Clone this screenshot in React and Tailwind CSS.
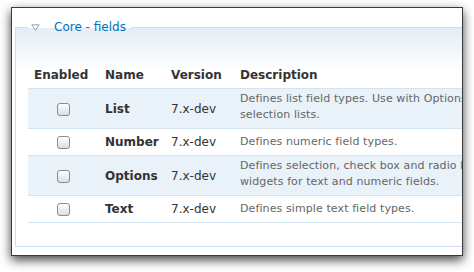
import React from "react";

const rows = [
  { name: "List", desc: ["Defines list field types. Use with Options to create selection lists."], two: true, odd: true },
  { name: "Number", desc: ["Defines numeric field types."], two: false, odd: false },
  { name: "Options", desc: ["Defines selection, check box and radio button widgets for text and numeric fields."], two: true, odd: true },
  { name: "Text", desc: ["Defines simple text field types."], two: false, odd: false },
];

function Checkbox() {
  return (
    <span className="inline-block w-[13px] h-[13px] rounded-[3px] border border-[#8c8c8c] bg-gradient-to-b from-white to-[#dedede] align-middle shadow-[inset_0_1px_0_#fff]" />
  );
}

export default function App() {
  return (
    <div className="min-h-[272px] bg-white pt-[7px] pl-[11px] font-['DejaVu_Sans',Verdana,sans-serif]">
      <div className="w-[452px] h-[249px] border border-[#3a3a3a] bg-white overflow-hidden shadow-[0_4px_10px_rgba(0,0,0,0.75)]">
        <fieldset className="ml-[3px] mt-[11px] w-[520px] border border-[#cfdfee] bg-[linear-gradient(to_bottom,#e4edf7,#ffffff_44px)] pt-[27px] pb-[23px] pl-[12px]">
          <legend className="pl-[3px] pr-[5px] flex items-center leading-[16px] text-[12px] text-[#0074bd]">
            <svg width="9" height="7" viewBox="0 0 9 7" className="mr-[14px]">
              <path d="M0.8 0.8 H8.2 L4.5 6.2 Z" fill="none" stroke="#a0a0a0" strokeWidth="1" strokeLinejoin="round" />
            </svg>
            <span>Core - fields</span>
          </legend>
          <table className="border-collapse w-[503px] text-[#333]">
            <thead>
              <tr className="border-b border-[#d3e3f0]">
                <th className="w-[71px] px-[6px] py-[5px] text-left text-[12px] leading-[16px] font-bold">Enabled</th>
                <th className="w-[66px] px-[6px] py-[5px] text-left text-[12px] leading-[16px] font-bold">Name</th>
                <th className="w-[69px] px-[6px] py-[5px] text-left text-[12px] leading-[16px] font-bold">Version</th>
                <th className="px-[6px] py-[5px] text-left text-[12px] leading-[16px] font-bold">Description</th>
              </tr>
            </thead>
            <tbody>
              {rows.map((r) => (
                <tr key={r.name} className={`border-b border-[#d3e3f0] ${r.odd ? "bg-[#e9f1f9]" : "bg-white"}`}>
                  <td className="px-[6px] text-center align-middle leading-[16px]">
                    <Checkbox />
                  </td>
                  <td className="px-[6px] align-middle text-[12px] leading-[16px] font-bold">{r.name}</td>
                  <td className="px-[6px] align-middle text-[12px] leading-[16px]">7.x-dev</td>
                  <td
                    className={
                      r.two
                        ? "px-[6px] pt-[2px] pb-[5px] align-top text-[11px] leading-[16px] tracking-[0.1px] text-[#666]"
                        : "px-[6px] py-[5px] align-middle text-[11px] leading-[16px] tracking-[0.1px] text-[#666]"
                    }
                  >
                    {r.desc[0]}
                  </td>
                </tr>
              ))}
            </tbody>
          </table>
        </fieldset>
      </div>
    </div>
  );
}
